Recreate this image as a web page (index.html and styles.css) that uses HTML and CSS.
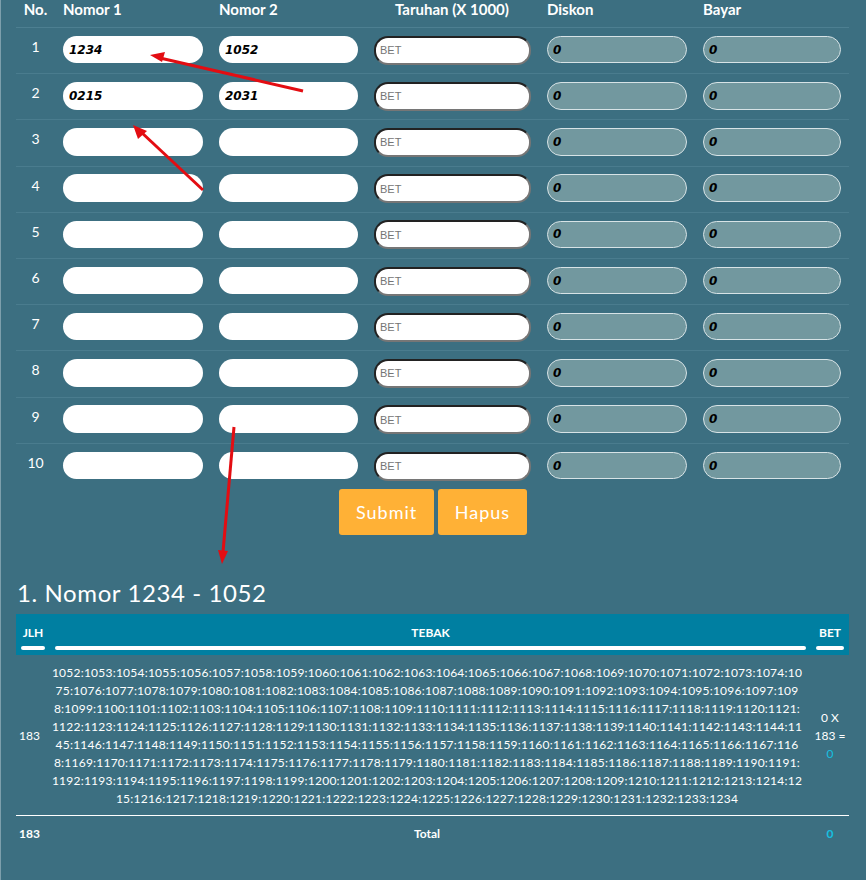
FILE: index.html
```html
<!DOCTYPE html>
<html lang="en">
<head>
    <meta charset="UTF-8">
    <meta name="viewport" content="width=device-width, initial-scale=1.0">
    <title>Nomor</title>
    <link rel="stylesheet" href="styles.css">
</head>
<body>

    <form class="bet-form">
        <table class="bet-table">
            <colgroup>
                <col class="w-no">
                <col class="w-num1">
                <col class="w-num2">
                <col class="w-bet">
                <col class="w-num1">
                <col class="w-last">
            </colgroup>
            <thead>
                <tr>
                    <th class="col-no">No.</th>
                    <th>Nomor 1</th>
                    <th>Nomor 2</th>
                    <th class="col-bet">Taruhan (X 1000)</th>
                    <th>Diskon</th>
                    <th>Bayar</th>
                </tr>
            </thead>
            <tbody>
                <tr>
                    <td class="col-no">1</td>
                    <td><input class="num" type="text" value="1234"></td>
                    <td><input class="num" type="text" value="1052"></td>
                    <td><input class="bet" type="text" placeholder="BET"></td>
                    <td><input class="num readonly" type="text" value="0" readonly></td>
                    <td><input class="num readonly" type="text" value="0" readonly></td>
                </tr>
                <tr>
                    <td class="col-no">2</td>
                    <td><input class="num" type="text" value="0215"></td>
                    <td><input class="num" type="text" value="2031"></td>
                    <td><input class="bet" type="text" placeholder="BET"></td>
                    <td><input class="num readonly" type="text" value="0" readonly></td>
                    <td><input class="num readonly" type="text" value="0" readonly></td>
                </tr>
                <tr>
                    <td class="col-no">3</td>
                    <td><input class="num" type="text"></td>
                    <td><input class="num" type="text"></td>
                    <td><input class="bet" type="text" placeholder="BET"></td>
                    <td><input class="num readonly" type="text" value="0" readonly></td>
                    <td><input class="num readonly" type="text" value="0" readonly></td>
                </tr>
                <tr>
                    <td class="col-no">4</td>
                    <td><input class="num" type="text"></td>
                    <td><input class="num" type="text"></td>
                    <td><input class="bet" type="text" placeholder="BET"></td>
                    <td><input class="num readonly" type="text" value="0" readonly></td>
                    <td><input class="num readonly" type="text" value="0" readonly></td>
                </tr>
                <tr>
                    <td class="col-no">5</td>
                    <td><input class="num" type="text"></td>
                    <td><input class="num" type="text"></td>
                    <td><input class="bet" type="text" placeholder="BET"></td>
                    <td><input class="num readonly" type="text" value="0" readonly></td>
                    <td><input class="num readonly" type="text" value="0" readonly></td>
                </tr>
                <tr>
                    <td class="col-no">6</td>
                    <td><input class="num" type="text"></td>
                    <td><input class="num" type="text"></td>
                    <td><input class="bet" type="text" placeholder="BET"></td>
                    <td><input class="num readonly" type="text" value="0" readonly></td>
                    <td><input class="num readonly" type="text" value="0" readonly></td>
                </tr>
                <tr>
                    <td class="col-no">7</td>
                    <td><input class="num" type="text"></td>
                    <td><input class="num" type="text"></td>
                    <td><input class="bet" type="text" placeholder="BET"></td>
                    <td><input class="num readonly" type="text" value="0" readonly></td>
                    <td><input class="num readonly" type="text" value="0" readonly></td>
                </tr>
                <tr>
                    <td class="col-no">8</td>
                    <td><input class="num" type="text"></td>
                    <td><input class="num" type="text"></td>
                    <td><input class="bet" type="text" placeholder="BET"></td>
                    <td><input class="num readonly" type="text" value="0" readonly></td>
                    <td><input class="num readonly" type="text" value="0" readonly></td>
                </tr>
                <tr>
                    <td class="col-no">9</td>
                    <td><input class="num" type="text"></td>
                    <td><input class="num" type="text"></td>
                    <td><input class="bet" type="text" placeholder="BET"></td>
                    <td><input class="num readonly" type="text" value="0" readonly></td>
                    <td><input class="num readonly" type="text" value="0" readonly></td>
                </tr>
                <tr>
                    <td class="col-no">10</td>
                    <td><input class="num" type="text"></td>
                    <td><input class="num" type="text"></td>
                    <td><input class="bet" type="text" placeholder="BET"></td>
                    <td><input class="num readonly" type="text" value="0" readonly></td>
                    <td><input class="num readonly" type="text" value="0" readonly></td>
                </tr>
            </tbody>
        </table>

        <div class="form-buttons">
            <button class="btn btn-submit" type="button">Submit</button>
            <button class="btn btn-reset" type="button">Hapus</button>
        </div>
    </form>

    <h2 class="result-title">1. Nomor 1234 - 1052</h2>

    <table class="result-table">
        <colgroup>
            <col class="w-jlh">
            <col class="w-tebak">
            <col class="w-total">
        </colgroup>
        <thead>
            <tr>
                <th>JLH</th>
                <th>TEBAK</th>
                <th>BET</th>
            </tr>
        </thead>
        <tbody>
            <tr>
                <td class="shift">183</td>
                <td class="numbers shift">1052:1053:1054:1055:1056:1057:1058:1059:1060:1061:1062:1063:1064:1065:1066:1067:1068:1069:1070:1071:1072:1073:1074:10<br>75:1076:1077:1078:1079:1080:1081:1082:1083:1084:1085:1086:1087:1088:1089:1090:1091:1092:1093:1094:1095:1096:1097:109<br>8:1099:1100:1101:1102:1103:1104:1105:1106:1107:1108:1109:1110:1111:1112:1113:1114:1115:1116:1117:1118:1119:1120:1121:<br>1122:1123:1124:1125:1126:1127:1128:1129:1130:1131:1132:1133:1134:1135:1136:1137:1138:1139:1140:1141:1142:1143:1144:11<br>45:1146:1147:1148:1149:1150:1151:1152:1153:1154:1155:1156:1157:1158:1159:1160:1161:1162:1163:1164:1165:1166:1167:116<br>8:1169:1170:1171:1172:1173:1174:1175:1176:1177:1178:1179:1180:1181:1182:1183:1184:1185:1186:1187:1188:1189:1190:1191:<br>1192:1193:1194:1195:1196:1197:1198:1199:1200:1201:1202:1203:1204:1205:1206:1207:1208:1209:1210:1211:1212:1213:1214:12<br>15:1216:1217:1218:1219:1220:1221:1222:1223:1224:1225:1226:1227:1228:1229:1230:1231:1232:1233:1234</td>
                <td>0 X<br>183 =<br><span class="amount">0</span></td>
            </tr>
        </tbody>
        <tfoot>
            <tr>
                <td class="shift">183</td>
                <td class="shift">Total</td>
                <td><span class="amount">0</span></td>
            </tr>
        </tfoot>
    </table>

    <!-- Red arrows drawn on top of the screenshot -->
    <svg class="arrows" width="866" height="880" viewBox="0 0 866 880">
        <g fill="none" stroke="#e30d12" stroke-width="3">
            <line x1="303" y1="91" x2="160" y2="58"/>
            <line x1="203" y1="190" x2="141" y2="132"/>
            <line x1="234" y1="427" x2="223" y2="552"/>
        </g>
        <g fill="#e30d12">
            <polygon points="150,55 165,52 162,62"/>
            <polygon points="133,125 147,131 138,139"/>
            <polygon points="222,564 218,550 228,551"/>
        </g>
    </svg>

</body>
</html>
```

FILE: styles.css
```css
body {
    font-family: "Lato", "Open Sans", sans-serif;
    margin: 0;
    padding: 0 16px;
    min-height: 880px;
    box-sizing: border-box;
    position: relative;
    color: #fff;
    background-color: #3c6f81;
    border-left: 1px solid #7d9fac;
    overflow: hidden;
}

table {
    border-collapse: collapse;
}

/* Bet form */
.bet-form {
    margin-left: -1px;
}

.bet-table {
    width: 833px;
    table-layout: fixed;
}

.w-no { width: 39px; }
.w-num1 { width: 156px; }
.w-num2 { width: 155px; }
.w-bet { width: 173px; }
.w-last { width: 154px; }

.bet-table th {
    height: 18px;
    padding: 0 8px 9px;
    font-size: 15px;
    font-weight: bold;
    text-align: left;
    line-height: 18px;
    border-bottom: 1px solid #4d7f91;
}

.bet-table th.col-no {
    padding: 0 0 9px;
    text-align: center;
}

.bet-table th.col-bet {
    padding-left: 29px;
}

.bet-table td {
    height: 46.2px;
    padding: 0 8px 2px;
    box-sizing: border-box;
    font-size: 14px;
    border-bottom: 1px solid #4a7c8e;
}

.bet-table tbody tr:last-child td {
    border-bottom: none;
}

.bet-table td.col-no {
    padding: 10px 0 0;
    text-align: center;
    vertical-align: top;
}

input {
    display: block;
    width: 100%;
    height: 27.5px;
    box-sizing: border-box;
    padding: 0 6px;
    border-radius: 14px;
    outline: none;
}

.num {
    font-family: "DejaVu Sans", sans-serif;
    font-size: 12px;
    font-weight: bold;
    font-style: italic;
    color: #000;
    background-color: #fff;
    border: none;
}

.num.readonly {
    background-color: #72989f;
    border: 1px solid #d7e3e6;
    padding: 0 5px;
}

.bet {
    font-family: "Liberation Sans", sans-serif;
    font-size: 11px;
    height: 29px;
    margin-top: 1px;
    padding: 0 4px;
    background-color: #fff;
    border: 2px solid;
    border-color: #222 #767676 #767676 #222;
}

.bet::placeholder {
    color: #757575;
}

.form-buttons {
    display: flex;
    gap: 4px;
    padding-left: 323px;
}

.btn {
    height: 46px;
    padding: 0 17px;
    font-family: inherit;
    font-size: 18px;
    letter-spacing: 1px;
    color: #fff;
    background-color: #ffb136;
    border: none;
    border-radius: 3px;
}

.btn-reset {
    padding: 0 16.5px;
}

/* Result */
.result-title {
    margin: 43px 0 7px;
    font-size: 24px;
    font-weight: normal;
    line-height: 29px;
    letter-spacing: 0.6px;
}

.result-table {
    width: 833px;
    margin-left: -1px;
    table-layout: fixed;
    text-align: center;
}

.w-jlh { width: 34px; }
.w-total { width: 38px; }

.result-table th {
    padding: 0 5px 4px;
    height: 41px;
    box-sizing: border-box;
    font-size: 12px;
    background-color: #007fa1;
    position: relative;
}

/* the white bar under each heading stops short of the cell edges */
.result-table th::after {
    content: "";
    position: absolute;
    left: 5px;
    right: 5px;
    bottom: 5px;
    height: 4px;
    background-color: #fff;
    border-radius: 2px;
}

.result-table td {
    padding: 0;
    font-size: 12px;
    line-height: 18px;
}

.result-table tbody td {
    padding-top: 9px;
    padding-bottom: 7px;
    border-bottom: 1px solid #fff;
}

.result-table tfoot td {
    height: 36px;
    font-weight: bold;
}

.result-table td.shift {
    padding-right: 7px;
}

.numbers {
    letter-spacing: 0.23px;
    white-space: nowrap;
}

.amount {
    color: #16bfe0;
}

.arrows {
    position: absolute;
    top: 0;
    left: -1px;
    pointer-events: none;
}
```
